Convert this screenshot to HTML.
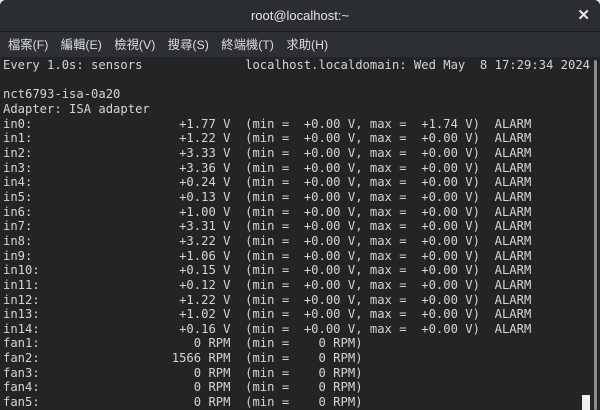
<!DOCTYPE html>
<html><head><meta charset="utf-8"><style>
html,body{margin:0;padding:0;width:600px;height:410px;overflow:hidden;background:#e8e8e7}
.win{position:absolute;left:0;top:0;width:600px;height:410px;background:#222426;border-radius:6px 6px 0 0;overflow:hidden}
.title{position:absolute;left:0;top:0;width:600px;height:31px;background:#2b2e31;border-bottom:1px solid #1b1c1e;color:#e6e6e6;font:13px "Liberation Sans",sans-serif;text-align:center;line-height:31px}
.x{position:absolute;right:10px;top:0;font-size:15px;font-weight:bold}
.menu{position:absolute;left:0;top:32px;width:600px;height:25px;background:#2d3033;color:#dcdcdc;font:12.3px "Liberation Sans","Noto Sans CJK TC",sans-serif;line-height:26px}
.menu span{margin-left:8px;margin-right:4.5px}
pre{position:absolute;left:3px;top:58px;margin:0;font:12.2px/14.65px "DejaVu Sans Mono","Liberation Mono",monospace;color:#d3d7cf}
.sb{position:absolute;left:594px;top:60px;width:3px;height:350px;background:#8a8c8e;border-radius:2px}
.cur{position:absolute;left:582px;top:395px;width:8px;height:15px;background:#f0f0f0}
</style></head><body><div class="win">
<div class="title">root@localhost:~<span class="x">✕</span></div>
<div class="menu"><span>檔案(F)</span><span>編輯(E)</span><span>檢視(V)</span><span>搜尋(S)</span><span>終端機(T)</span><span>求助(H)</span></div>
<pre>Every 1.0s: sensors              localhost.localdomain: Wed May  8 17:29:34 2024

nct6793-isa-0a20
Adapter: ISA adapter
in0:                    +1.77 V  (min =  +0.00 V, max =  +1.74 V)  ALARM
in1:                    +1.22 V  (min =  +0.00 V, max =  +0.00 V)  ALARM
in2:                    +3.33 V  (min =  +0.00 V, max =  +0.00 V)  ALARM
in3:                    +3.36 V  (min =  +0.00 V, max =  +0.00 V)  ALARM
in4:                    +0.24 V  (min =  +0.00 V, max =  +0.00 V)  ALARM
in5:                    +0.13 V  (min =  +0.00 V, max =  +0.00 V)  ALARM
in6:                    +1.00 V  (min =  +0.00 V, max =  +0.00 V)  ALARM
in7:                    +3.31 V  (min =  +0.00 V, max =  +0.00 V)  ALARM
in8:                    +3.22 V  (min =  +0.00 V, max =  +0.00 V)  ALARM
in9:                    +1.06 V  (min =  +0.00 V, max =  +0.00 V)  ALARM
in10:                   +0.15 V  (min =  +0.00 V, max =  +0.00 V)  ALARM
in11:                   +0.12 V  (min =  +0.00 V, max =  +0.00 V)  ALARM
in12:                   +1.22 V  (min =  +0.00 V, max =  +0.00 V)  ALARM
in13:                   +1.02 V  (min =  +0.00 V, max =  +0.00 V)  ALARM
in14:                   +0.16 V  (min =  +0.00 V, max =  +0.00 V)  ALARM
fan1:                     0 RPM  (min =    0 RPM)
fan2:                  1566 RPM  (min =    0 RPM)
fan3:                     0 RPM  (min =    0 RPM)
fan4:                     0 RPM  (min =    0 RPM)
fan5:                     0 RPM  (min =    0 RPM)</pre>
<div class="sb"></div><div class="cur"></div>
</div></body></html>
